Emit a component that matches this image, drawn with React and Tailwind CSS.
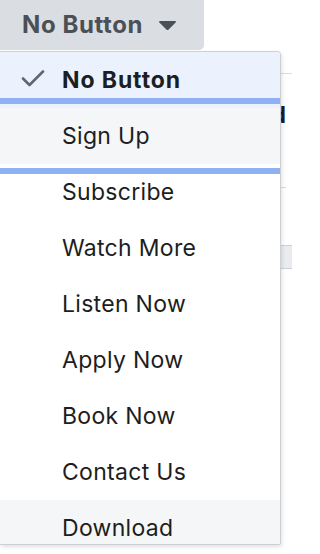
import React from "react";

const items = [
  "No Button",
  "Sign Up",
  "Subscribe",
  "Watch More",
  "Listen Now",
  "Apply Now",
  "Book Now",
  "Contact Us",
  "Download",
];

const Check = () => (
  <svg className="absolute left-[21px] top-[18px]" width="24" height="18" viewBox="0 0 24 18">
    <path d="M2 8.5 L8.5 15 L22 1.5" fill="none" stroke="#606770" strokeWidth="2.6" strokeLinecap="round" strokeLinejoin="round" />
  </svg>
);

const Caret = () => (
  <svg width="19" height="11" viewBox="0 0 19 11">
    <path d="M2 1 H17 Q18.6 1 17.6 2.4 L10.6 9.6 Q9.5 10.6 8.4 9.6 L1.4 2.4 Q0.4 1 2 1 Z" fill="#4b4f56" />
  </svg>
);

export default function App() {
  return (
    <div className="relative w-[292px] h-[554px] bg-white overflow-hidden font-['Inter','Liberation_Sans',sans-serif]">
      {/* page behind the menu */}
      <div className="flex h-[50px] w-[204px] items-center gap-[15px] rounded-br-[5px] bg-[#dadde1] pl-[22px]">
        <span className="text-[24px] font-bold tracking-[0.6px] text-[#4b4f56]">No Button</span>
        <Caret />
      </div>
      <div className="h-[24px] border-b border-[#dadde1]" />
      <div className="flex h-[114px] w-[286px] justify-end pt-[28px] border-b border-[#dadde1]">
        <span className="text-[23px] font-bold leading-[26px] text-[#1c1e21]">Add</span>
      </div>
      <div className="h-[57px]" />
      <div className="h-[24px] border-y border-[#ccd0d5] bg-[#e9ebee]" />

      {/* dropdown menu */}
      <div className="absolute left-0 top-[51px] h-[494px] w-[281px] overflow-hidden rounded-tr-[4px] rounded-br-[2px] border border-l-0 border-[#ccd0d5] bg-white shadow-[1px_2px_4px_rgba(0,0,0,0.12)]">
        {items.map((label, i) => (
          <div
            key={label}
            className={
              "relative flex h-[56px] shrink-0 items-center pl-[62px] text-[23px] text-[#1c1e21] " +
              (i === 0
                ? "bg-[#ebf2fe] font-bold tracking-[0.9px]"
                : i === 1 || i === 8
                ? "bg-[#f5f6f7] tracking-[0.3px]"
                : "bg-white tracking-[0.3px]")
            }
          >
            {i === 0 && <Check />}
            {label}
          </div>
        ))}
        <div className="absolute left-0 top-[46px] h-[6px] w-full bg-[#8fb1f1]" />
        <div className="absolute left-0 top-[116px] h-[6px] w-full bg-[#8fb1f1]" />
      </div>
    </div>
  );
}
